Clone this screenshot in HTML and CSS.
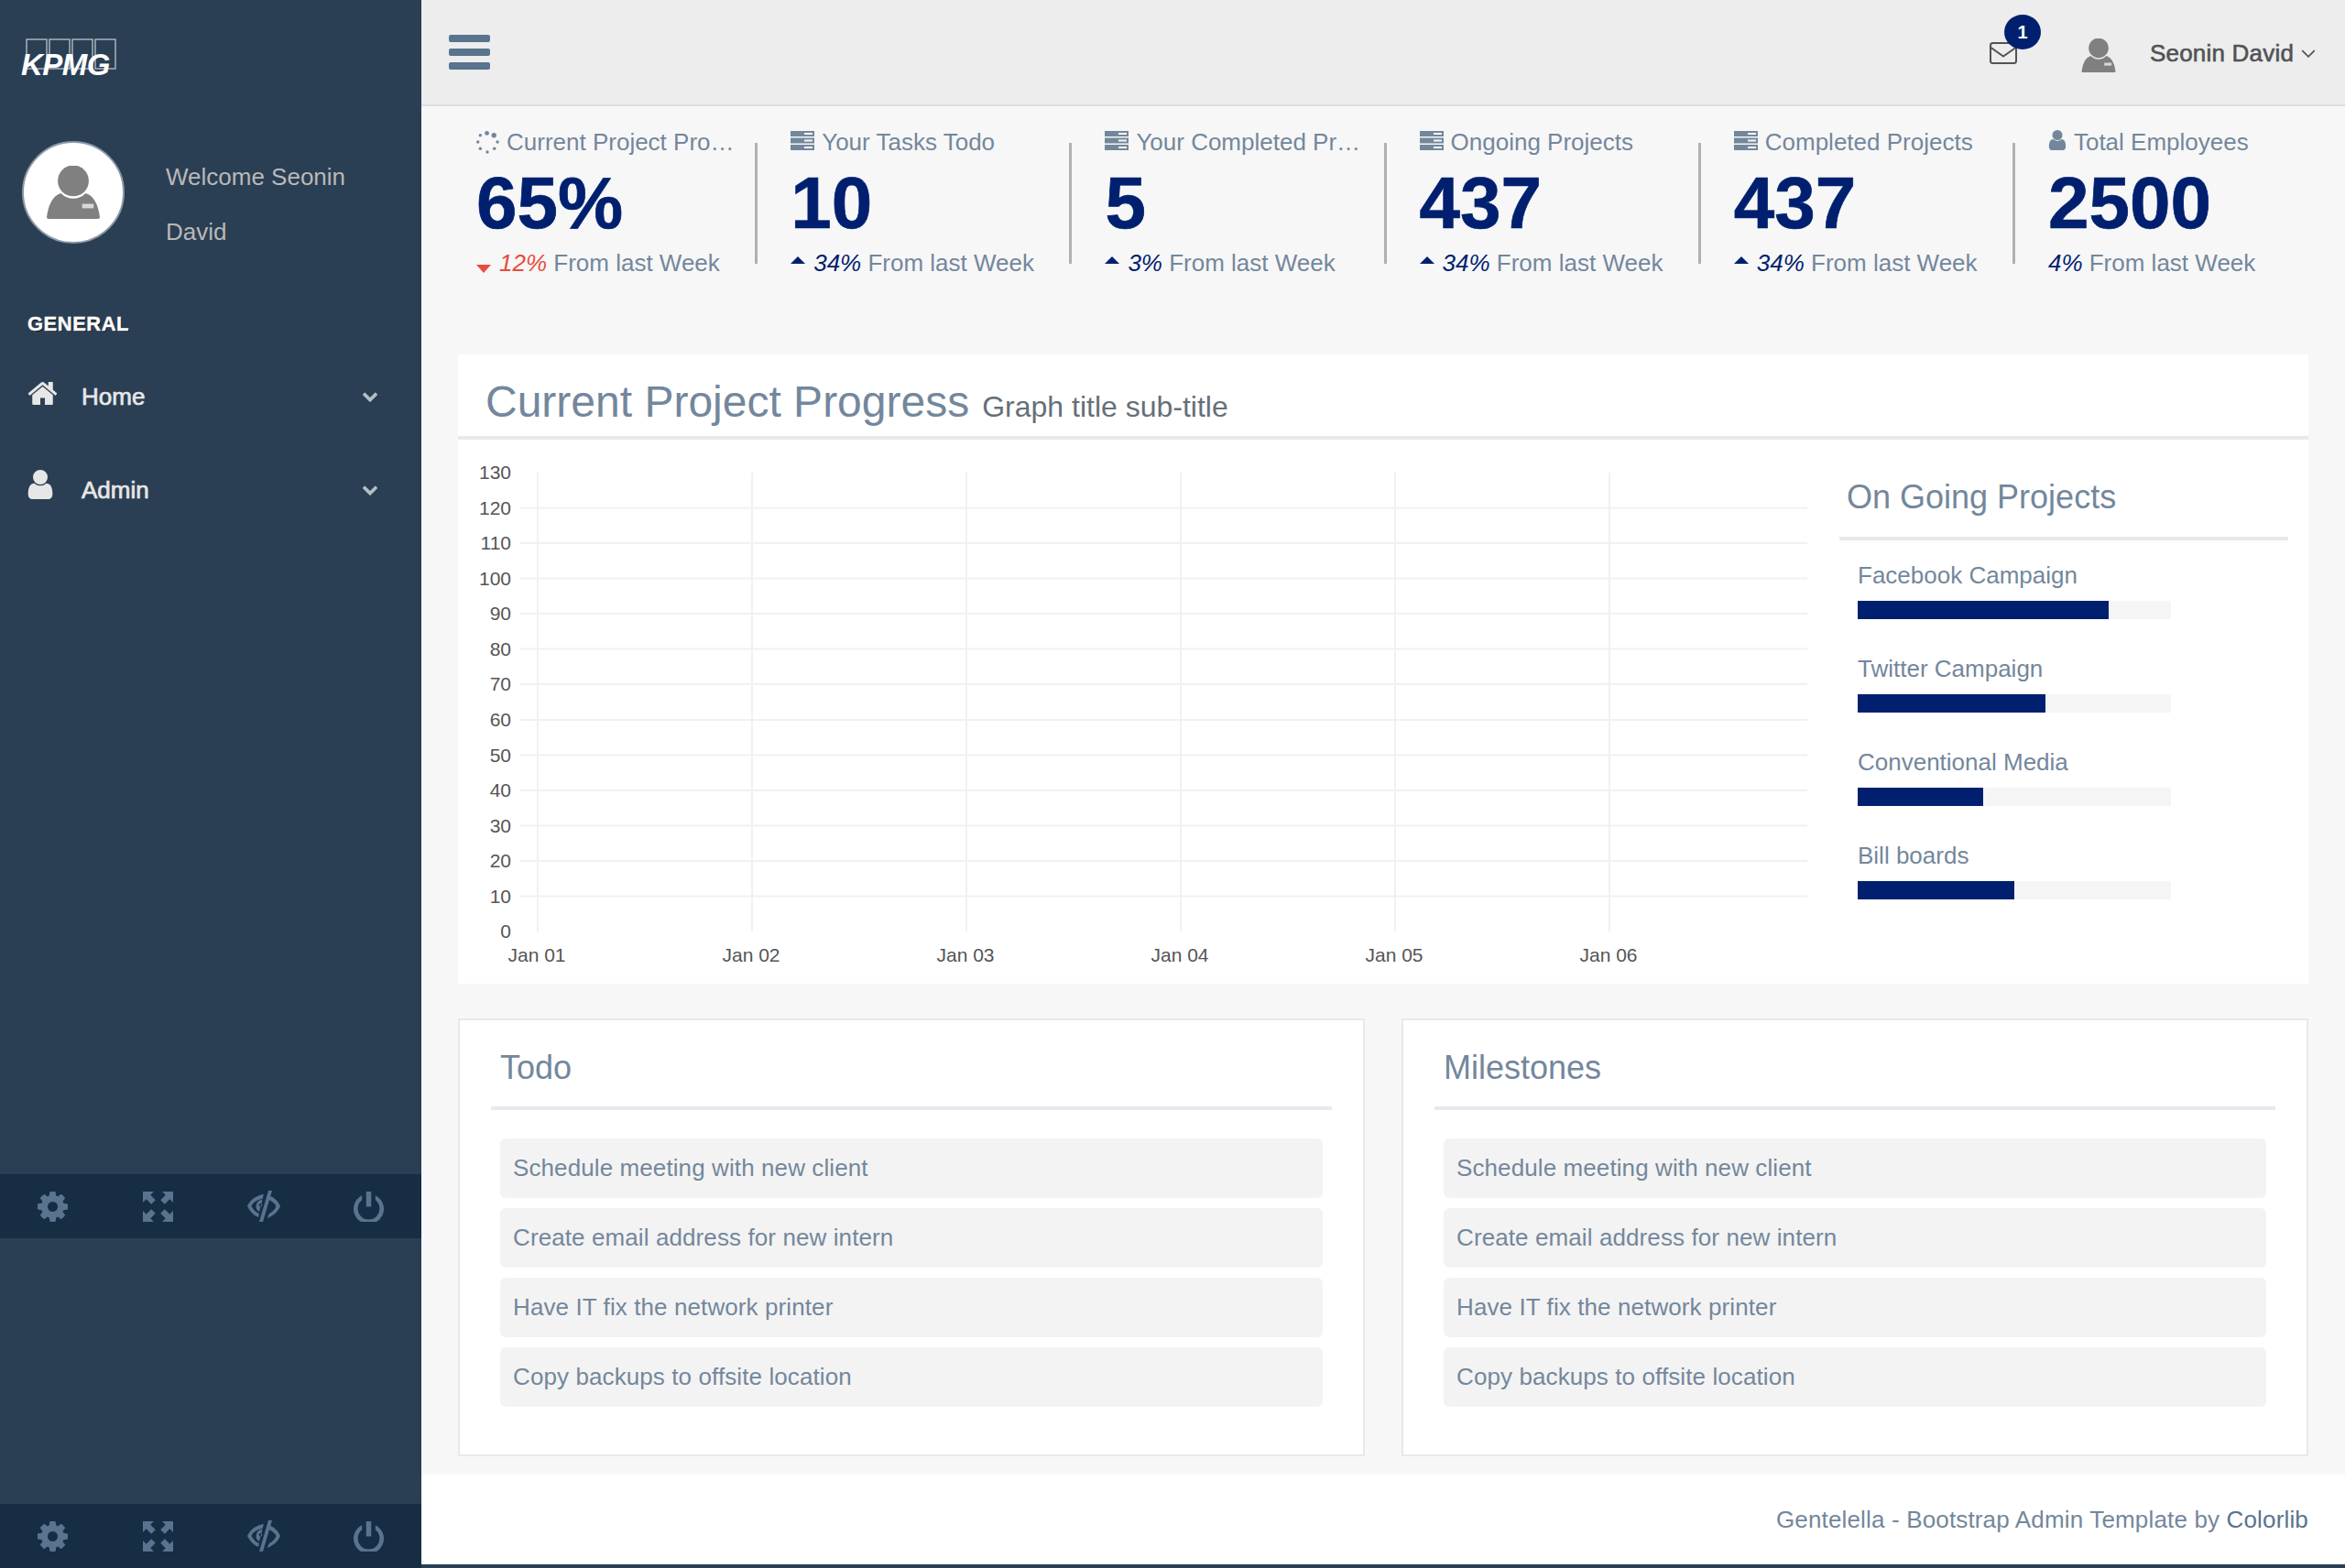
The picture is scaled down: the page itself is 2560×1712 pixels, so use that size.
FILE: index.html
```html
<!DOCTYPE html>
<html lang="en">
<head>
    <meta charset="UTF-8">
    <meta name="viewport" content="width=device-width, initial-scale=1.0">
    <title>Dashboard</title>
    <link rel="stylesheet" href="styles.css">
</head>
<body>
    <svg class="icon-defs" width="0" height="0">
        <symbol id="i-home" viewBox="0 0 1792 1792"><path d="M1472 992v480q0 26-19 45t-45 19h-384v-384h-256v384h-384q-26 0-45-19t-19-45v-480q0-1 .5-3t.5-3l575-474 575 474q1 2 1 6zm223-69l-62 74q-8 9-21 11h-3q-13 0-21-7l-692-577-692 577q-12 8-24 7-13-2-21-11l-62-74q-8-10-7-23.5t11-21.5l719-599q32-26 76-26t76 26l244 204v-195q0-14 9-23t23-9h192q14 0 23 9t9 23v408l219 182q10 8 11 21.5t-7 23.5z"/></symbol>
        <symbol id="i-user" viewBox="256 128 1280 1536"><path d="M1536 1399q0 109-62.5 187t-150.5 78h-854q-88 0-150.5-78t-62.5-187q0-85 8.5-160.5t31.5-152 58.5-131 94-89 134.5-34.5q131 128 313 128t313-128q76 0 134.5 34.5t94 89 58.5 131 31.5 152 8.5 160.5zm-256-887q0 159-112.5 271.5t-271.5 112.5-271.5-112.5-112.5-271.5 112.5-271.5 271.5-112.5 271.5 112.5 112.5 271.5z"/></symbol>
        <symbol id="i-chevron" viewBox="90 380 1612 1190"><path d="M1683 808l-742 741q-19 19-45 19t-45-19l-742-741q-19-19-19-45.5t19-45.5l166-165q19-19 45-19t45 19l531 531 531-531q19-19 45-19t45 19l166 165q19 19 19 45.5t-19 45.5z"/></symbol>
        <symbol id="i-cog" viewBox="128 128 1536 1536"><path d="M1152 896q0-106-75-181t-181-75-181 75-75 181 75 181 181 75 181-75 75-181zm512-109v222q0 12-8 23t-20 13l-185 28q-19 54-39 91 35 50 107 138 10 12 10 25t-9 23q-27 37-99 108t-94 71q-12 0-26-9l-138-108q-44 23-91 38-16 136-29 186-7 28-36 28h-222q-14 0-24.5-8.5t-11.5-21.5l-28-184q-49-16-90-37l-141 107q-10 9-25 9-14 0-25-11-126-114-165-168-7-10-7-23 0-12 8-23 15-21 51-66.5t54-70.5q-27-50-41-99l-183-27q-13-2-21-12.5t-8-23.5v-222q0-12 8-23t19-13l186-28q14-46 39-92-40-57-107-138-10-12-10-24 0-10 9-23 26-36 98.5-107.5t94.5-71.5q13 0 26 10l138 107q44-23 91-38 16-136 29-186 7-28 36-28h222q14 0 24.5 8.5t11.5 21.5l28 184q49 16 90 37l142-107q9-9 24-9 13 0 25 10 129 119 165 170 7 8 7 22 0 12-8 23-15 21-51 66.5t-54 70.5q26 50 41 98l183 28q13 2 21 12.5t8 23.5z"/></symbol>
        <symbol id="i-full" viewBox="0 0 36 36"><path d="M0 0h13l-4 4 6 6-5 5-6-6-4 4zM36 0v13l-4-4-6 6-5-5 6-6-4-4zM0 36V23l4 4 6-6 5 5-6 6 4 4zM36 36H23l4-4-6-6 5-5 6 6 4-4z"/></symbol>
        <symbol id="i-eye" viewBox="0 0 36 34"><path d="M23 0h4L17 34h-4z"/><path d="M0 17C3 10 10 5 18 4l-1.500 5C10 10 6 13 4.500 17c2 4 5.500 7 8.500 8l-1 4C7 27 3 23 0 17z"/><path fill-rule="evenodd" d="M16.500 10L13 23A7 7 0 0 1 16.500 10zM14.500 14a1.800 1.800 0 1 0 0 3.600 1.800 1.800 0 0 0 0-3.600z"/><path d="M25 6c5 2 9 6 11 11-3 7-9 11-14 13l1.500-4.500c3.500-2 7-5 8-8.500-1.500-3-4.500-5.500-8-7z"/></symbol>
        <symbol id="i-power" viewBox="0 0 36 36"><path d="M15 0h6v18h-6zM10 4.500v5.600a13 13 0 1 0 16 0V4.500a18 18 0 1 1-16 0z"/></symbol>
        <symbol id="i-server" viewBox="0 0 26 21"><path d="M0 0h26v6H0zM0 7.500h26v6H0zM0 15h26v6H0z"/><path class="server-led" d="M15 2h9v2h-9zM15 9.500h9v2h-9zM15 17h9v2h-9z"/></symbol>
        <symbol id="i-spinner" viewBox="0 0 26 26"><circle cx="12" cy="2.500" r="2.500"/><circle cx="20" cy="5" r="2.800"/><circle cx="24" cy="12.500" r="1.800"/><circle cx="20.500" cy="20" r="1.800"/><circle cx="12.500" cy="24" r="1.800"/><circle cx="4.500" cy="20" r="1.800"/><circle cx="1.800" cy="12.500" r="1.800"/><circle cx="4.500" cy="5" r="1.800"/></symbol>
        <symbol id="i-person" viewBox="0 0 60 60"><circle cx="30" cy="17" r="17.500"/><path d="M16 31q6 6 14 6t14-6q13 4 16 27a2 2 0 0 1-2 2H2a2 2 0 0 1-2-2q3-23 16-27z"/><rect class="person-mark" x="40" y="43" width="13" height="5"/></symbol>
    </svg>

    <div class="app">
        <aside class="sidebar">
            <div class="logo">
                <svg class="logo-boxes" width="104" height="36" viewBox="0 0 104 36">
                    <rect x="1" y="1" width="22" height="32"/>
                    <rect x="26" y="1" width="22" height="32"/>
                    <rect x="51" y="1" width="22" height="32"/>
                    <rect x="76" y="1" width="22" height="32"/>
                </svg>
                <span class="logo-text">KPMG</span>
            </div>

            <div class="profile">
                <div class="profile-pic"><svg class="profile-person"><use href="#i-person"/></svg></div>
                <div class="profile-name">Welcome Seonin David</div>
            </div>

            <h3 class="menu-title">GENERAL</h3>
            <ul class="menu">
                <li><svg class="menu-icon menu-home"><use href="#i-home"/></svg><span>Home</span><svg class="menu-chevron"><use href="#i-chevron"/></svg></li>
                <li><svg class="menu-icon menu-user"><use href="#i-user"/></svg><span>Admin</span><svg class="menu-chevron"><use href="#i-chevron"/></svg></li>
            </ul>

            <div class="sidebar-footer footer-one">
                <svg><use href="#i-cog"/></svg>
                <svg><use href="#i-full"/></svg>
                <svg class="eye"><use href="#i-eye"/></svg>
                <svg><use href="#i-power"/></svg>
            </div>
            <div class="sidebar-footer footer-two">
                <svg><use href="#i-cog"/></svg>
                <svg><use href="#i-full"/></svg>
                <svg class="eye"><use href="#i-eye"/></svg>
                <svg><use href="#i-power"/></svg>
            </div>
        </aside>

        <div class="main">
            <header class="topbar">
                <div class="toggle"><span></span><span></span><span></span></div>
                <div class="mail">
                    <svg class="mail-icon" viewBox="0 0 30 24"><rect x="1" y="1" width="28" height="22" rx="2.500"/><path d="M1.500 6L15 15.500 28.500 6"/></svg>
                    <span class="badge">1</span>
                </div>
                <svg class="top-person"><use href="#i-person"/></svg>
                <span class="top-user">Seonin David</span>
                <svg class="top-caret" viewBox="0 0 14 8"><path d="M1 1l6 6 6-6"/></svg>
            </header>

            <section class="stats">
                <div class="tile">
                    <div class="tile-top"><svg class="tile-spinner"><use href="#i-spinner"/></svg><span>Current Project Progress</span></div>
                    <div class="tile-count">65%</div>
                    <div class="tile-foot"><i class="arrow-down"></i><em class="red">12%</em> From last Week</div>
                </div>
                <div class="tile">
                    <div class="tile-top"><svg class="tile-server"><use href="#i-server"/></svg><span>Your Tasks Todo</span></div>
                    <div class="tile-count">10</div>
                    <div class="tile-foot"><i class="arrow-up"></i><em>34%</em> From last Week</div>
                </div>
                <div class="tile">
                    <div class="tile-top"><svg class="tile-server"><use href="#i-server"/></svg><span>Your Completed Projects</span></div>
                    <div class="tile-count">5</div>
                    <div class="tile-foot"><i class="arrow-up"></i><em>3%</em> From last Week</div>
                </div>
                <div class="tile">
                    <div class="tile-top"><svg class="tile-server"><use href="#i-server"/></svg><span>Ongoing Projects</span></div>
                    <div class="tile-count">437</div>
                    <div class="tile-foot"><i class="arrow-up"></i><em>34%</em> From last Week</div>
                </div>
                <div class="tile">
                    <div class="tile-top"><svg class="tile-server"><use href="#i-server"/></svg><span>Completed Projects</span></div>
                    <div class="tile-count">437</div>
                    <div class="tile-foot"><i class="arrow-up"></i><em>34%</em> From last Week</div>
                </div>
                <div class="tile">
                    <div class="tile-top"><svg class="tile-user"><use href="#i-user"/></svg><span>Total Employees</span></div>
                    <div class="tile-count">2500</div>
                    <div class="tile-foot"><em>4%</em> From last Week</div>
                </div>
            </section>

            <section class="panel-graph">
                <div class="graph-head"><h2>Current Project Progress</h2><small>Graph title sub-title</small></div>
                <div class="graph-body">
                    <svg class="chart" width="1508" height="594" viewBox="0 0 1508 594">
                        <g class="grid">
                            <path d="M68 74.500H1473M68 113H1473M68 151.500H1473M68 190H1473M68 228.500H1473M68 267H1473M68 306H1473M68 344.500H1473M68 383H1473M68 421.500H1473M68 460H1473M68 498.500H1473"/>
                            <path d="M87 36V537M321 36V537M555 36V537M789 36V537M1023 36V537M1257 36V537"/>
                        </g>
                        <g class="y-labels">
                            <text x="58" y="43">130</text>
                            <text x="58" y="81.500">120</text>
                            <text x="58" y="120">110</text>
                            <text x="58" y="158.500">100</text>
                            <text x="58" y="197">90</text>
                            <text x="58" y="235.500">80</text>
                            <text x="58" y="274">70</text>
                            <text x="58" y="313">60</text>
                            <text x="58" y="351.500">50</text>
                            <text x="58" y="390">40</text>
                            <text x="58" y="428.500">30</text>
                            <text x="58" y="467">20</text>
                            <text x="58" y="505.500">10</text>
                            <text x="58" y="544">0</text>
                        </g>
                        <g class="x-labels">
                            <text x="86" y="570">Jan 01</text>
                            <text x="320" y="570">Jan 02</text>
                            <text x="554" y="570">Jan 03</text>
                            <text x="788" y="570">Jan 04</text>
                            <text x="1022" y="570">Jan 05</text>
                            <text x="1256" y="570">Jan 06</text>
                        </g>
                    </svg>
                    <div class="side">
                        <h3>On Going Projects</h3>
                        <div class="bars">
                            <div class="bar-item"><span>Facebook Campaign</span><div class="bar"><div class="bar-fill" style="width: 80%"></div></div></div>
                            <div class="bar-item"><span>Twitter Campaign</span><div class="bar"><div class="bar-fill" style="width: 60%"></div></div></div>
                            <div class="bar-item"><span>Conventional Media</span><div class="bar"><div class="bar-fill" style="width: 40%"></div></div></div>
                            <div class="bar-item"><span>Bill boards</span><div class="bar"><div class="bar-fill" style="width: 50%"></div></div></div>
                        </div>
                    </div>
                </div>
            </section>

            <section class="lists">
                <div class="list-panel">
                    <h3>Todo</h3>
                    <ul>
                        <li>Schedule meeting with new client</li>
                        <li>Create email address for new intern</li>
                        <li>Have IT fix the network printer</li>
                        <li>Copy backups to offsite location</li>
                    </ul>
                </div>
                <div class="list-panel">
                    <h3>Milestones</h3>
                    <ul>
                        <li>Schedule meeting with new client</li>
                        <li>Create email address for new intern</li>
                        <li>Have IT fix the network printer</li>
                        <li>Copy backups to offsite location</li>
                    </ul>
                </div>
            </section>

            <footer class="page-footer">Gentelella - Bootstrap Admin Template by <a>Colorlib</a></footer>
        </div>
    </div>
</body>
</html>
```

FILE: styles.css
```css
* {
    box-sizing: border-box;
}
body {
    margin: 0;
    font-family: "Liberation Sans", Arial, sans-serif;
    font-size: 26px;
    color: #73879C;
    background: #F7F7F7;
}
h2, h3, ul {
    margin: 0;
    padding: 0;
    font-weight: normal;
}
ul {
    list-style: none;
}
.icon-defs {
    position: absolute;
}
.app {
    display: flex;
    height: 1712px;
    overflow: hidden;
}

/* sidebar */
.sidebar {
    width: 460px;
    flex: none;
    display: flex;
    flex-direction: column;
    background: #2A3F54;
}
.logo {
    position: relative;
    height: 42px;
    margin: 42px 0 0 24px;
}
.logo-boxes rect {
    fill: none;
    stroke: #a9b2bb;
    stroke-width: 1.500;
}
.logo-boxes {
    display: block;
    margin-left: 4px;
}
.logo-text {
    position: absolute;
    left: -1px;
    top: 13px;
    font-size: 33px;
    line-height: 32px;
    font-weight: bold;
    font-style: italic;
    color: #fff;
    letter-spacing: -0.5px;
}
.profile {
    display: flex;
    margin: 70px 0 0 24px;
}
.profile-pic {
    width: 112px;
    height: 112px;
    flex: none;
    display: flex;
    align-items: center;
    justify-content: center;
    border-radius: 50%;
    background: #fff;
    border: 2px solid #8d99a6;
}
.profile-person {
    width: 60px;
    height: 58px;
    fill: #808080;
}
.person-mark {
    fill: #d8d8d8;
}
.profile-name {
    width: 230px;
    margin: 9px 0 0 45px;
    line-height: 60px;
    color: #BAB8B8;
}
.menu-title {
    margin: 57px 0 0 30px;
    font-size: 22px;
    line-height: 28px;
    font-weight: bold;
    letter-spacing: 0.5px;
    color: #fff;
    text-shadow: 1px 1px #000;
    -webkit-text-stroke: 0.4px #fff;
}
.menu {
    margin-top: 14px;
}
.menu li {
    display: flex;
    align-items: center;
    height: 102px;
    padding-left: 30px;
    color: #E7E7E7;
    -webkit-text-stroke: 0.7px #E7E7E7;
}
.menu-icon {
    flex: none;
    fill: #E7E7E7;
}
.menu-home {
    width: 35px;
    height: 35px;
    margin: -8px 25px 0 -1px;
}
.menu-user {
    width: 28px;
    height: 32px;
    margin: -12px 31px 0 0;
}
.menu-chevron {
    width: 18px;
    height: 12px;
    margin-left: auto;
    margin-right: 47px;
    fill: #b5bfc9;
}
.sidebar-footer {
    display: grid;
    grid-template-columns: repeat(4, 115px);
    align-items: center;
    justify-items: center;
    height: 70px;
    flex: none;
    background: #172D44;
}
.sidebar-footer svg {
    width: 33px;
    height: 33px;
    fill: #5A738E;
}
.sidebar-footer .eye {
    width: 36px;
    height: 34px;
}
.footer-one {
    margin-top: 696px;
}
.footer-two {
    margin-top: auto;
}

/* top bar */
.main {
    width: 2100px;
    display: flex;
    flex-direction: column;
}
.topbar {
    display: flex;
    align-items: center;
    height: 116px;
    flex: none;
    padding-left: 30px;
    background: #EDEDED;
    border-bottom: 2px solid #D9DEE4;
}
.toggle {
    display: flex;
    flex-direction: column;
    gap: 7px;
    width: 45px;
}
.toggle span {
    height: 8px;
    border-radius: 2px;
    background: #5A738E;
}
.mail {
    position: relative;
    margin-left: 1637px;
    margin-top: 1px;
    width: 30px;
    height: 24px;
}
.mail-icon {
    display: block;
    width: 30px;
    height: 24px;
    fill: none;
    stroke: #515356;
    stroke-width: 2;
}
.badge {
    position: absolute;
    left: 16px;
    top: -30px;
    width: 40px;
    height: 38px;
    border-radius: 50%;
    background: #00206F;
    color: #fff;
    font-size: 20px;
    font-weight: bold;
    line-height: 38px;
    text-align: center;
}
.top-person {
    width: 38px;
    height: 37px;
    margin: 6px 0 0 70px;
    fill: #808080;
}
.top-user {
    margin: 2px 0 0 37px;
    color: #515356;
    letter-spacing: 0.2px;
    -webkit-text-stroke: 0.6px #515356;
}
.top-caret {
    width: 16px;
    height: 9px;
    margin: 2px 0 0 8px;
    fill: none;
    stroke: #515356;
    stroke-width: 1.500;
}

/* stat tiles */
.stats {
    display: grid;
    grid-template-columns: repeat(6, 343.2px);
    height: 271px;
    flex: none;
    padding: 21px 0 0 23px;
}
.tile {
    position: relative;
    padding-left: 37px;
}
.tile + .tile::before {
    content: "";
    position: absolute;
    left: -2px;
    top: 19px;
    width: 3px;
    height: 132px;
    background: #ADB2B5;
}
.tile-top {
    display: flex;
    align-items: center;
    gap: 8px;
    height: 36px;
    white-space: nowrap;
}
.tile-top span {
    overflow: hidden;
    text-overflow: ellipsis;
    max-width: 256px;
}
.tile-top svg {
    flex: none;
    fill: #73879C;
}
.server-led {
    fill: #F7F7F7;
}
.tile-spinner {
    width: 25px;
    height: 25px;
}
.tile-server {
    width: 26px;
    height: 21px;
    margin-top: -4px;
}
.tile-user {
    width: 20px;
    height: 22px;
    margin-top: -4px;
}
.tile-count {
    margin-top: 4px;
    font-size: 80px;
    line-height: 90px;
    font-weight: bold;
    color: #00206F;
    -webkit-text-stroke: 0.7px #00206F;
}
.tile-foot {
    margin-top: 2px;
    height: 36px;
    line-height: 36px;
    white-space: nowrap;
}
.tile-foot em {
    color: #00206F;
}
.tile-foot em.red {
    color: #E74C3C;
}
.arrow-down, .arrow-up {
    display: inline-block;
    width: 0;
    height: 0;
    margin-right: 9px;
    border-left: 8px solid transparent;
    border-right: 8px solid transparent;
    vertical-align: 2px;
}
.arrow-down {
    border-top: 9px solid #E74C3C;
    vertical-align: -2px;
}
.arrow-up {
    border-bottom: 8px solid #00206F;
    vertical-align: 8px;
}

/* graph panel */
.panel-graph {
    margin: 0 40px;
    height: 687px;
    flex: none;
    background: #fff;
}
.graph-head {
    display: flex;
    align-items: baseline;
    gap: 14px;
    height: 93px;
    padding: 22px 0 0 30px;
    border-bottom: 4px solid #E6E9ED;
}
.graph-head h2 {
    font-size: 48px;
    line-height: 60px;
}
.graph-head small {
    font-size: 32px;
    color: #666f78;
}
.graph-body {
    display: flex;
}
.chart {
    flex: none;
    display: block;
}
.grid path {
    fill: none;
    stroke: #f1f1f3;
    stroke-width: 2;
}
.y-labels text, .x-labels text {
    font-size: 21px;
    fill: #555;
}
.y-labels text {
    text-anchor: end;
}
.x-labels text {
    text-anchor: middle;
}
.side {
    width: 490px;
}
.side h3 {
    height: 110px;
    padding: 41px 0 0 8px;
    font-size: 36px;
    line-height: 44px;
    border-bottom: 4px solid #E6E9ED;
}
.bars {
    padding: 20px 0 0 20px;
}
.bar-item {
    height: 102px;
}
.bar-item span {
    display: block;
    height: 46px;
    line-height: 36px;
}
.bar {
    width: 342px;
    height: 20px;
    background: #F5F5F5;
}
.bar-fill {
    height: 100%;
    background: #00206F;
}

/* todo and milestones */
.lists {
    display: grid;
    grid-template-columns: 990px 990px;
    gap: 40px;
    margin: 38px 40px 0;
    height: 478px;
    flex: none;
}
.list-panel {
    padding: 0 34px;
    background: #fff;
    border: 2px solid #E6E9ED;
}
.list-panel h3 {
    height: 98px;
    padding: 30px 0 0 10px;
    font-size: 36px;
    line-height: 44px;
    border-bottom: 4px solid #E6E9ED;
}
.list-panel ul {
    display: flex;
    flex-direction: column;
    gap: 11px;
    margin-top: 31px;
    padding: 0 10px;
}
.list-panel li {
    height: 65px;
    padding-left: 14px;
    line-height: 65px;
    letter-spacing: 0.1px;
    background: #F3F3F3;
    border-radius: 6px;
}

/* footer */
.page-footer {
    margin-top: 20px;
    height: 102px;
    flex: none;
    padding: 30px 40px 0 0;
    line-height: 38px;
    letter-spacing: 0.16px;
    text-align: right;
    background: #fff;
    border-bottom: 4px solid #2A3F54;
}
.page-footer a {
    color: #5A738E;
}
```
